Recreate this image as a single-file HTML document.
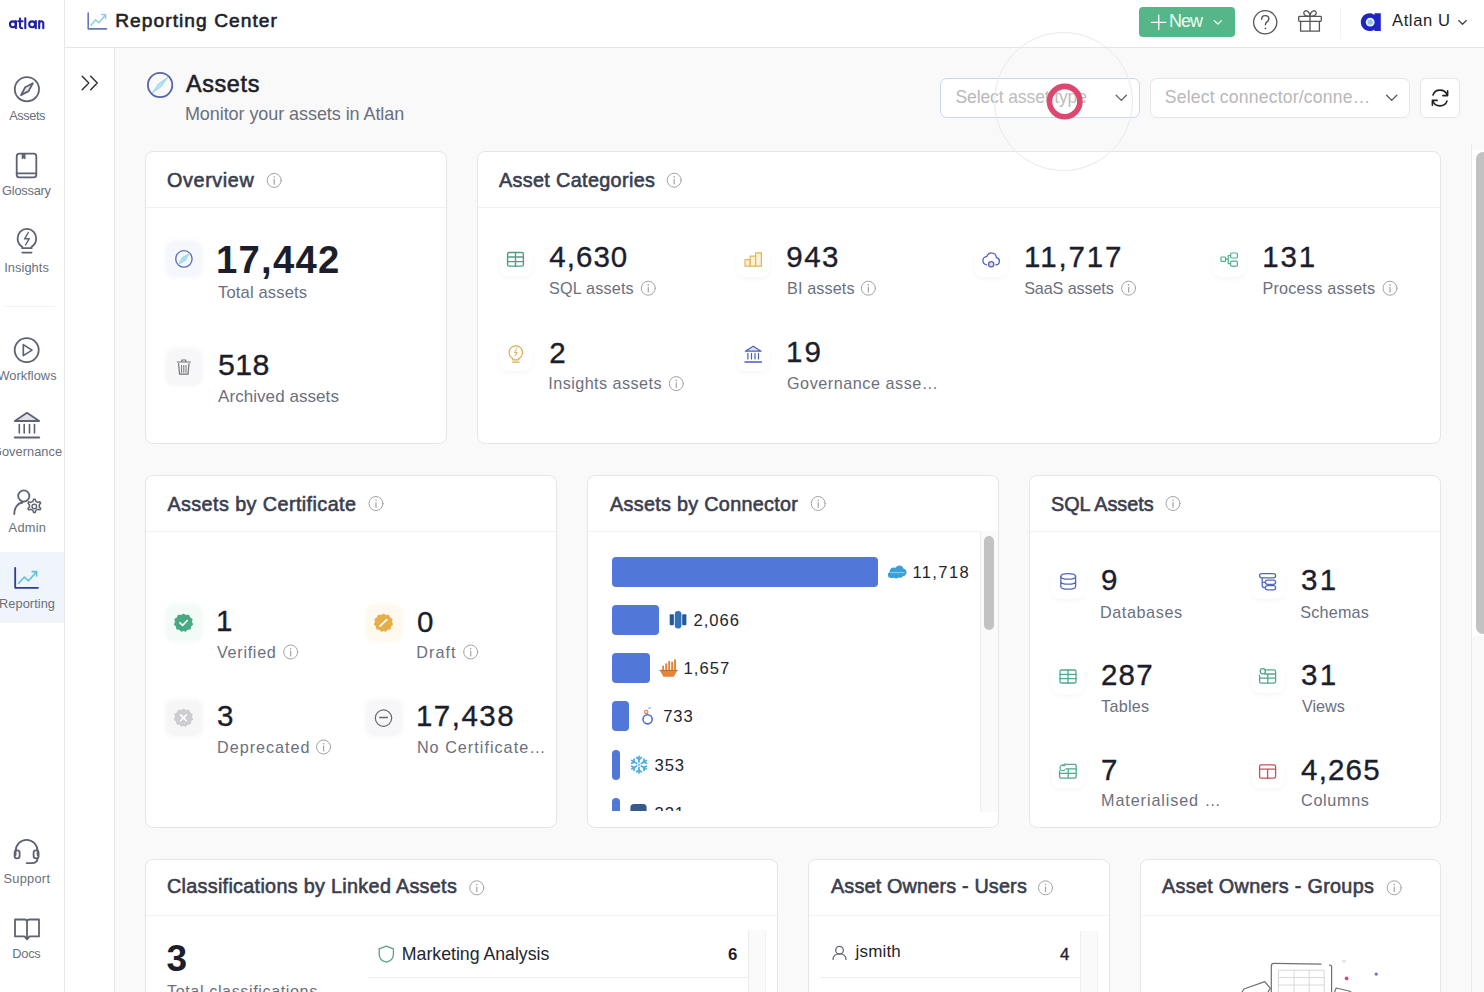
<!DOCTYPE html>
<html><head><meta charset="utf-8">
<style>
*{box-sizing:border-box}
html,body{margin:0;padding:0}
body{width:1484px;height:992px;overflow:hidden;position:relative;background:#f9f9f9;font-family:"Liberation Sans",sans-serif;color:#1f2130}
.a{position:absolute}
.t{position:absolute;white-space:nowrap;line-height:1}
svg{position:absolute;overflow:visible}
.textonly{background:#fff}
.textonly .t{color:#000 !important}
.textonly .a,.textonly svg,.textonly .card{display:none}
#side{left:0;top:0;width:65px;height:992px;background:#fff;border-right:1px solid #e8e8e8}
#hdr{left:65px;top:0;width:1419px;height:48px;background:#fff;border-bottom:1px solid #e4e4e4}
#col{left:65px;top:48px;width:50px;height:944px;background:#fff;border-right:1px solid #e6e6e6}
.card{position:absolute;background:#fff;border:1px solid #e6e6e6;border-radius:8px;overflow:hidden}
.ch{position:absolute;left:0;top:55px;right:0;height:1px;background:#f2f2f3}
.ib{position:absolute;width:34px;height:34px;border-radius:9px;background:#fff;box-shadow:0 3px 5px -1px rgba(40,50,90,0.045)}
.med{-webkit-text-stroke:0.35px currentColor}
.bar{position:absolute;left:612px;height:30px;background:#5177d9;border-radius:4px}
</style></head><body>

<!-- ===== sidebar ===== -->
<div id="side" class="a"></div>
<div class="a" style="left:5px;top:306px;width:50px;height:1px;background:#f1f1f1"></div>
<div class="a" style="left:0;top:552px;width:64px;height:71px;background:#f0f4fb"></div>

<!-- ===== header ===== -->
<div id="hdr" class="a"></div>
<div class="a" style="left:1340px;top:8px;width:1px;height:31px;background:#f3f3f3"></div>
<div class="a" style="left:1139px;top:7px;width:96px;height:30px;background:#55b689;border-radius:4px"></div>

<!-- ===== collapse column ===== -->
<div id="col" class="a"></div>

<!-- ===== page selects ===== -->
<div class="a" style="left:940px;top:78px;width:200px;height:40px;background:#fff;border:1px solid #c9d5f2;border-radius:7px"></div>
<div class="a" style="left:1150px;top:78px;width:260px;height:40px;background:#fff;border:1px solid #e6e6e6;border-radius:7px"></div>
<div class="a" style="left:1420px;top:78px;width:40px;height:40px;background:#fff;border:1px solid #e6e6e6;border-radius:6px"></div>

<!-- ===== cards ===== -->
<div class="card" style="left:145px;top:151px;width:302px;height:293px"><div class="ch"></div></div>
<div class="card" style="left:477px;top:151px;width:964px;height:293px"><div class="ch"></div></div>
<div class="card" style="left:145px;top:475px;width:412px;height:353px"><div class="ch"></div></div>
<div class="card" style="left:587px;top:475px;width:412px;height:353px"><div class="ch"></div></div>
<div class="card" style="left:1029px;top:475px;width:412px;height:353px"><div class="ch"></div></div>
<div class="card" style="left:145px;top:859px;width:633px;height:200px"><div class="ch"></div></div>
<div class="card" style="left:808px;top:859px;width:302px;height:200px"><div class="ch"></div></div>
<div class="card" style="left:1140px;top:859px;width:301px;height:200px"><div class="ch"></div></div>

<!-- main scrollbar -->
<div class="a" style="left:1471px;top:144px;width:13px;height:848px;background:#f9f9f9;border-left:1px solid #ebebeb"></div>
<div class="a" style="left:1472px;top:150px;width:12px;height:486px;background:#fff"></div>
<div class="a" style="left:1476px;top:152px;width:14px;height:482px;background:#c2c2c2;border-radius:7px"></div>

<!-- connector bars -->
<div class="bar" style="top:557px;width:266px"></div>
<div class="bar" style="top:605px;width:47px"></div>
<div class="bar" style="top:653px;width:38px"></div>
<div class="bar" style="top:701px;width:17px"></div>
<div class="bar" style="top:750px;width:8px"></div>
<div class="bar" style="top:798px;width:8px;height:13px;border-radius:4px 4px 0 0"></div>
<!-- connector scroll -->
<div class="a" style="left:980px;top:531px;width:18px;height:281px;background:#fafafa;border-left:1px solid #efefef"></div>
<div class="a" style="left:984px;top:536px;width:10px;height:94px;background:#c2c2c2;border-radius:5px"></div>

<!-- list scroll tracks -->
<div class="a" style="left:748px;top:930px;width:18px;height:62px;background:#fafafa;border-left:1px solid #ededed;border-right:1px solid #f1f1f1"></div>
<div class="a" style="left:368px;top:977px;width:380px;height:1px;background:#efefef"></div>
<div class="a" style="left:1080px;top:931px;width:18px;height:61px;background:#fafafa;border-left:1px solid #ededed;border-right:1px solid #f1f1f1"></div>
<div class="a" style="left:820px;top:977px;width:260px;height:1px;background:#efefef"></div>

<!-- icon boxes -->
<div class="a" style="left:167.3px;top:242.0px;width:34px;height:34px;border-radius:7px;background:#f6f7fc;box-shadow:0 0 5px 2px #f6f7fc"></div>
<div class="a" style="left:166.8px;top:350.0px;width:34px;height:34px;border-radius:7px;background:#f7f7f9;box-shadow:0 0 5px 2px #f7f7f9"></div>
<div class="ib" style="left:498.5px;top:242.3px"></div>
<div class="ib" style="left:736.2px;top:242.5px"></div>
<div class="ib" style="left:974.2px;top:243.0px"></div>
<div class="ib" style="left:1212.3px;top:242.5px"></div>
<div class="ib" style="left:498.8px;top:337.1px"></div>
<div class="ib" style="left:736.2px;top:337.1px"></div>
<div class="a" style="left:166.5px;top:605.9px;width:34px;height:34px;border-radius:7px;background:#f3fbf7;box-shadow:0 0 5px 2px #f3fbf7"></div>
<div class="a" style="left:366.5px;top:605.9px;width:34px;height:34px;border-radius:7px;background:#fdf9ee;box-shadow:0 0 5px 2px #fdf9ee"></div>
<div class="a" style="left:166.5px;top:700.8px;width:34px;height:34px;border-radius:7px;background:#f6f6f7;box-shadow:0 0 5px 2px #f6f6f7"></div>
<div class="a" style="left:366.5px;top:701.1px;width:34px;height:34px;border-radius:7px;background:#f7f7f9;box-shadow:0 0 5px 2px #f7f7f9"></div>
<div class="ib" style="left:1051.2px;top:564.5px"></div>
<div class="ib" style="left:1250.5px;top:564.6px"></div>
<div class="ib" style="left:1051.0px;top:659.5px"></div>
<div class="ib" style="left:1250.5px;top:659.0px"></div>
<div class="ib" style="left:1050.8px;top:754.0px"></div>
<div class="ib" style="left:1250.6px;top:754.4px"></div>

<div id="rc" class="t" style="left:115.20px;top:10.99px;font-size:19.19px;letter-spacing:1.044px;color:#1d1f2a;-webkit-text-stroke:0.6px currentColor">Reporting Center</div>
<div id="new" class="t" style="left:1169.10px;top:12.38px;font-size:18.02px;letter-spacing:-1.080px;color:#ecfff3">New</div>
<div id="user" class="t" style="left:1392.00px;top:13.12px;font-size:16.57px;letter-spacing:0.600px;color:#1d1f2a">Atlan U</div>
<div id="pt" class="t" style="left:185.90px;top:72.71px;font-size:23.40px;letter-spacing:0.648px;color:#1d1f2a;-webkit-text-stroke:0.6px currentColor">Assets</div>
<div id="ps" class="t" style="left:184.90px;top:105.08px;font-size:18.02px;letter-spacing:-0.073px;color:#6b6f7d">Monitor your assets in Atlan</div>
<div id="sel1" class="t" style="left:955.50px;top:88.75px;font-size:17.59px;letter-spacing:-0.146px;color:#b8b8b8">Select asset type</div>
<div id="sel2" class="t" style="left:1164.80px;top:88.75px;font-size:17.59px;letter-spacing:0.188px;color:#b8b8b8">Select connector/conne…</div>
<div id="t1" class="t" style="left:167.00px;top:170.67px;font-size:19.80px;letter-spacing:0.617px;color:#3a3e4e;-webkit-text-stroke:0.6px currentColor">Overview</div>
<div id="t2" class="t" style="left:498.90px;top:170.67px;font-size:19.80px;letter-spacing:0.360px;color:#3a3e4e;-webkit-text-stroke:0.6px currentColor">Asset Categories</div>
<div id="t3" class="t" style="left:167.40px;top:494.57px;font-size:19.80px;letter-spacing:0.414px;color:#3a3e4e;-webkit-text-stroke:0.6px currentColor">Assets by Certificate</div>
<div id="t4" class="t" style="left:610.00px;top:494.57px;font-size:19.80px;letter-spacing:0.300px;color:#3a3e4e;-webkit-text-stroke:0.6px currentColor">Assets by Connector</div>
<div id="t5" class="t" style="left:1051.00px;top:494.57px;font-size:19.80px;letter-spacing:-0.000px;color:#3a3e4e;-webkit-text-stroke:0.6px currentColor">SQL Assets</div>
<div id="t6" class="t" style="left:166.90px;top:877.47px;font-size:19.80px;letter-spacing:0.308px;color:#3a3e4e;-webkit-text-stroke:0.6px currentColor">Classifications by Linked Assets</div>
<div id="t7" class="t" style="left:831.00px;top:877.47px;font-size:19.80px;letter-spacing:0.180px;color:#3a3e4e;-webkit-text-stroke:0.6px currentColor">Asset Owners - Users</div>
<div id="t8" class="t" style="left:1162.00px;top:877.47px;font-size:19.80px;letter-spacing:0.315px;color:#3a3e4e;-webkit-text-stroke:0.6px currentColor">Asset Owners - Groups</div>
<div id="o1" class="t" style="left:216.10px;top:241.11px;font-size:38.23px;letter-spacing:1.260px;color:#1c1e2b;font-weight:bold">17,442</div>
<div id="o2" class="t" style="left:218.00px;top:284.92px;font-size:16.57px;letter-spacing:0.147px;color:#6c707e">Total assets</div>
<div id="o3" class="t med" style="left:218.10px;top:349.08px;font-size:30.38px;letter-spacing:0.270px;color:#1c1e2b">518</div>
<div id="o4" class="t" style="left:218.00px;top:387.75px;font-size:17.01px;letter-spacing:0.064px;color:#6c707e">Archived assets</div>
<div id="c1" class="t med" style="left:549.30px;top:242.42px;font-size:29.50px;letter-spacing:1.035px;color:#1c1e2b">4,630</div>
<div id="c1l" class="t" style="left:549.00px;top:279.83px;font-size:16.20px;letter-spacing:0.180px;color:#6c707e">SQL assets</div>
<div id="c2" class="t med" style="left:786.30px;top:242.42px;font-size:29.50px;letter-spacing:1.440px;color:#1c1e2b">943</div>
<div id="c2l" class="t" style="left:787.10px;top:279.83px;font-size:16.20px;letter-spacing:0.113px;color:#6c707e">BI assets</div>
<div id="c3" class="t med" style="left:1024.10px;top:242.42px;font-size:29.50px;letter-spacing:1.872px;color:#1c1e2b">11,717</div>
<div id="c3l" class="t" style="left:1024.20px;top:279.83px;font-size:16.20px;letter-spacing:-0.126px;color:#6c707e">SaaS assets</div>
<div id="c4" class="t med" style="left:1262.20px;top:242.42px;font-size:29.50px;letter-spacing:1.890px;color:#1c1e2b">131</div>
<div id="c4l" class="t" style="left:1262.40px;top:279.83px;font-size:16.20px;letter-spacing:0.235px;color:#6c707e">Process assets</div>
<div id="c5" class="t med" style="left:549.20px;top:338.32px;font-size:29.50px;letter-spacing:0.000px;color:#1c1e2b">2</div>
<div id="c5l" class="t" style="left:548.30px;top:375.03px;font-size:16.20px;letter-spacing:0.437px;color:#6c707e">Insights assets</div>
<div id="c6" class="t med" style="left:786.00px;top:337.32px;font-size:29.50px;letter-spacing:2.160px;color:#1c1e2b">19</div>
<div id="c6l" class="t" style="left:787.00px;top:375.03px;font-size:16.20px;letter-spacing:0.528px;color:#6c707e">Governance asse…</div>
<div id="v1" class="t med" style="left:216.10px;top:606.13px;font-size:29.50px;letter-spacing:0.000px;color:#1c1e2b">1</div>
<div id="v1l" class="t" style="left:217.00px;top:644.43px;font-size:16.20px;letter-spacing:0.694px;color:#6c707e">Verified</div>
<div id="v2" class="t med" style="left:417.10px;top:606.63px;font-size:29.50px;letter-spacing:0.000px;color:#1c1e2b">0</div>
<div id="v2l" class="t" style="left:416.30px;top:644.43px;font-size:16.20px;letter-spacing:1.035px;color:#6c707e">Draft</div>
<div id="v3" class="t med" style="left:216.90px;top:701.13px;font-size:29.50px;letter-spacing:0.000px;color:#1c1e2b">3</div>
<div id="v3l" class="t" style="left:217.10px;top:739.43px;font-size:16.20px;letter-spacing:0.960px;color:#6c707e">Deprecated</div>
<div id="v4" class="t med" style="left:415.90px;top:701.13px;font-size:29.50px;letter-spacing:1.512px;color:#1c1e2b">17,438</div>
<div id="v4l" class="t" style="left:416.90px;top:739.43px;font-size:16.20px;letter-spacing:1.016px;color:#6c707e">No Certificate…</div>
<div id="k1" class="t" style="left:912.40px;top:564.99px;font-size:16.60px;letter-spacing:1.368px;color:#23252e">11,718</div>
<div id="k2" class="t" style="left:693.50px;top:612.89px;font-size:16.60px;letter-spacing:0.990px;color:#23252e">2,066</div>
<div id="k3" class="t" style="left:683.40px;top:660.79px;font-size:16.60px;letter-spacing:1.080px;color:#23252e">1,657</div>
<div id="k4" class="t" style="left:663.20px;top:709.49px;font-size:16.60px;letter-spacing:0.900px;color:#23252e">733</div>
<div id="k5" class="t" style="left:654.60px;top:757.99px;font-size:16.60px;letter-spacing:0.810px;color:#23252e">353</div>
<div id="k6" class="t" style="left:654.60px;top:806.19px;font-size:16.60px;letter-spacing:0.810px;color:#23252e">321</div>
<div id="s1" class="t med" style="left:1101.10px;top:564.72px;font-size:29.50px;letter-spacing:0.000px;color:#1c1e2b">9</div>
<div id="s1l" class="t" style="left:1100.00px;top:603.73px;font-size:16.20px;letter-spacing:0.585px;color:#6c707e">Databases</div>
<div id="s2" class="t med" style="left:1301.10px;top:564.72px;font-size:29.50px;letter-spacing:2.340px;color:#1c1e2b">31</div>
<div id="s2l" class="t" style="left:1300.30px;top:603.73px;font-size:16.20px;letter-spacing:0.180px;color:#6c707e">Schemas</div>
<div id="s3" class="t med" style="left:1100.90px;top:660.13px;font-size:29.50px;letter-spacing:1.260px;color:#1c1e2b">287</div>
<div id="s3l" class="t" style="left:1101.10px;top:697.93px;font-size:16.20px;letter-spacing:0.252px;color:#6c707e">Tables</div>
<div id="s4" class="t med" style="left:1301.10px;top:660.13px;font-size:29.50px;letter-spacing:2.340px;color:#1c1e2b">31</div>
<div id="s4l" class="t" style="left:1302.10px;top:697.93px;font-size:16.20px;letter-spacing:-0.045px;color:#6c707e">Views</div>
<div id="s5" class="t med" style="left:1100.90px;top:755.13px;font-size:29.50px;letter-spacing:0.000px;color:#1c1e2b">7</div>
<div id="s5l" class="t" style="left:1101.10px;top:792.43px;font-size:16.20px;letter-spacing:0.886px;color:#6c707e">Materialised …</div>
<div id="s6" class="t med" style="left:1301.10px;top:755.13px;font-size:29.50px;letter-spacing:1.170px;color:#1c1e2b">4,265</div>
<div id="s6l" class="t" style="left:1301.10px;top:792.43px;font-size:16.20px;letter-spacing:0.660px;color:#6c707e">Columns</div>
<div id="b1" class="t" style="left:166.40px;top:940.30px;font-size:37.06px;letter-spacing:0.000px;color:#1c1e2b;font-weight:bold">3</div>
<div id="b1l" class="t" style="left:167.00px;top:983.03px;font-size:16.20px;letter-spacing:0.585px;color:#6c707e">Total classifications</div>
<div id="b2" class="t" style="left:401.80px;top:945.73px;font-size:17.73px;letter-spacing:-0.011px;color:#23252e">Marketing Analysis</div>
<div id="b3" class="t" style="left:728.00px;top:947.42px;font-size:16.80px;letter-spacing:0.000px;color:#1c1e2b;font-weight:bold">6</div>
<div id="b4" class="t" style="left:855.50px;top:943.35px;font-size:17.00px;letter-spacing:0.180px;color:#23252e">jsmith</div>
<div id="b5" class="t med" style="left:1059.90px;top:947.22px;font-size:16.80px;letter-spacing:0.000px;color:#1c1e2b">4</div>
<div id="n1" class="t" style="left:9.20px;top:109.92px;font-size:12.80px;letter-spacing:-0.432px;color:#6b6f7b">Assets</div>
<div id="n2" class="t" style="left:2.10px;top:185.32px;font-size:12.80px;letter-spacing:-0.231px;color:#6b6f7b">Glossary</div>
<div id="n3" class="t" style="left:4.20px;top:262.12px;font-size:12.80px;letter-spacing:0.077px;color:#6b6f7b">Insights</div>
<div id="n4" class="t" style="left:-73.00px;width:200px;text-align:center;top:370.12px;font-size:12.80px;letter-spacing:0.05px;color:#6b6f7b">Workflows</div>
<div id="n5" class="t" style="left:-73.00px;width:200px;text-align:center;top:446.12px;font-size:12.80px;letter-spacing:0.05px;color:#6b6f7b">Governance</div>
<div id="n6" class="t" style="left:8.60px;top:522.12px;font-size:12.80px;letter-spacing:0.270px;color:#6b6f7b">Admin</div>
<div id="n7" class="t" style="left:-73.00px;width:200px;text-align:center;top:598.12px;font-size:12.80px;letter-spacing:0.05px;color:#6b6f7b">Reporting</div>
<div id="n8" class="t" style="left:3.50px;top:872.72px;font-size:12.80px;letter-spacing:0.270px;color:#6b6f7b">Support</div>
<div id="n9" class="t" style="left:12.30px;top:948.32px;font-size:12.80px;letter-spacing:-0.240px;color:#6b6f7b">Docs</div>

<svg style="left:0;top:0" width="1484" height="992" viewBox="0 0 1484 992" fill="none" stroke-linecap="round" stroke-linejoin="round">
<!-- logo -->
<g stroke="#1f21a6" stroke-width="2.1" fill="none">
 <circle cx="12.9" cy="24.3" r="2.95"/><path d="M15.9 21.1 V28.2"/>
 <path d="M20 18.6 V26.3 C20 27.6 20.7 28.2 22.2 28.2 M18.3 21.3 H22.6"/>
 <path d="M25.3 18.4 V28.2"/>
 <circle cx="32.1" cy="24.3" r="2.95"/><path d="M35.8 21.1 V28.2"/>
 <path d="M39.2 21.1 V28.2 M39.2 24 C39.2 22.2 40.1 21.3 41.3 21.3 C42.5 21.3 43.3 22.2 43.3 23.8 V28.2"/>
</g>
<!-- sidebar icons -->
<g stroke="#5f6270" stroke-width="1.8">
 <circle cx="26.9" cy="89.2" r="12.1"/>
 <path d="M21 95.1 L25.2 87.3 L32.8 83.3 L28.6 91.1 Z" fill="#e9eaee"/>
 <rect x="16.7" y="153.7" width="19.6" height="23.7" rx="2.6"/>
 <path d="M16.7 173.3 H36.3"/>
 <path d="M22.3 154 V158.6 L23.6 157.3 L24.9 158.6 V154" fill="#5f6270" stroke-width="1.2"/>
 <path d="M22.2 246.8 C19.6 245.2 17.6 242.1 17.6 238.3 C17.6 233 21.8 228.9 26.9 228.9 C32 228.9 36.2 233 36.2 238.3 C36.2 242.1 34.2 245.2 31.6 246.8 V248.2 H22.2 Z"/>
 <path d="M22.3 252.6 H31.5"/>
 <path d="M28.3 232.5 L24.6 238.8 H29.2 L25.5 245" stroke-width="1.4"/>
 <circle cx="26.7" cy="350.1" r="12"/>
 <path d="M23.3 344.6 V355.6 L32 350.1 Z" stroke-width="1.7"/>
 <path d="M14.8 421 L27 412.8 L39.2 421 Z" fill="#dfe2ec"/>
 <path d="M19.3 424.5 V433 M24.2 424.5 V433 M29.5 424.5 V433 M34.5 424.5 V433" stroke-width="1.6"/>
 <path d="M14.8 437.6 H39.2" stroke-width="2"/>
 <circle cx="23.8" cy="496" r="5.6"/>
 <path d="M14.3 514 C14.3 508 17.5 503.2 22.6 502.5"/>
 <path d="M33.6 499.2 l1.5 0 l0.7 2.1 l2 1.1 l2.1 -0.6 l0.8 1.3 l-1.4 1.7 v2.1 l1.4 1.7 l-0.8 1.3 l-2.1 -0.6 l-2 1.1 l-0.7 2.1 h-1.5 l-0.7 -2.1 l-2 -1.1 l-2.1 0.6 l-0.8 -1.3 l1.4 -1.7 v-2.1 l-1.4 -1.7 l0.8 -1.3 l2.1 0.6 l2 -1.1 Z" stroke-width="1.5"/>
 <circle cx="34.3" cy="506.4" r="2.3" stroke-width="1.4"/>
 <path d="M15.6 855 V851.5 C15.6 844.8 20.5 839.9 26.6 839.9 C32.7 839.9 37.6 844.8 37.6 851.5 V855"/>
 <rect x="14.6" y="850.3" width="5" height="8" rx="2.3"/>
 <rect x="33.6" y="850.3" width="5" height="8" rx="2.3"/>
 <path d="M37.6 858 C37.6 861.5 35 863.1 31.5 863.1 H26.6"/>
 <path d="M15 919.5 H24.5 C26 919.5 27 920.4 27 921.8 V938 M39 919.5 H29.5 C28 919.5 27 920.4 27 921.8 M15 919.5 V936.4 H24.5 L27 939.3 L29.5 936.4 H39 V919.5"/>
</g>
<g stroke-width="1.8">
 <path d="M15.2 567.8 V587.8 H38" stroke="#2d3f8e"/>
 <path d="M18.6 583.2 L24.4 577 L28.5 580.8 L36.4 572" stroke="#5ec1dc" stroke-width="1.6"/>
 <path d="M32.2 571.6 H36.6 V576" stroke="#5ec1dc" stroke-width="1.6"/>
</g>
<!-- header icons -->
<g stroke-width="1.6">
 <path d="M88.2 13 V28.9 H106.5" stroke="#6877b8"/>
 <path d="M91 25.3 L95.6 19.8 L98.8 22.8 L105.2 15.2" stroke="#8ccdea" stroke-width="1.5"/>
 <path d="M101.6 14.6 H105.6 V18.6" stroke="#8ccdea" stroke-width="1.5"/>
</g>
<path d="M82.2 76.3 L88.8 83 L82.2 89.7 M90.7 76.3 L97.3 83 L90.7 89.7" stroke="#2b2d35" stroke-width="1.4"/>
<g stroke="#fff" stroke-width="1.4"><path d="M1158.7 15.3 V29.6 M1151.6 22.4 H1165.8"/><path d="M1214.2 20.6 L1217.9 24 L1221.5 20.6" stroke-width="1.2"/></g>
<circle cx="1265.2" cy="22.3" r="11.6" stroke="#555" stroke-width="1.3"/>
<path d="M1261.6 19.2 C1261.6 16.8 1263.2 15.6 1265.2 15.6 C1267.3 15.6 1268.9 16.9 1268.9 18.9 C1268.9 21.6 1265.4 21.7 1265.4 24.8" stroke="#555" stroke-width="1.4"/>
<circle cx="1265.4" cy="28.3" r="0.9" fill="#555"/>
<g stroke="#555" stroke-width="1.3">
 <rect x="1298.7" y="16.3" width="22.6" height="5" rx="0.8"/>
 <path d="M1300.6 21.3 V31.2 H1319.4 V21.3 M1310 16.3 V31.2"/>
 <path d="M1310 16.3 C1306.5 16.3 1303.8 15.2 1303.8 12.9 C1303.8 11.4 1305.2 10.5 1306.5 10.8 C1308.5 11.3 1310 14.2 1310 16.3 C1310 14.2 1311.5 11.3 1313.5 10.8 C1314.8 10.5 1316.2 11.4 1316.2 12.9 C1316.2 15.2 1313.5 16.3 1310 16.3"/>
</g>
<path d="M1380.8 13.3 V31 H1374.5 V29.4 C1373.1 30.5 1371.4 31.1 1369.6 31.1 C1364.6 31.1 1360.8 27 1360.8 22.1 C1360.8 17.2 1364.6 13.2 1369.6 13.2 C1371.4 13.2 1373.1 13.8 1374.5 14.9 V13.3 Z" fill="#1f25c4"/>
<circle cx="1370.2" cy="22.2" r="4.4" fill="#e9f3fb"/><circle cx="1370.2" cy="22.2" r="2.6" fill="#8fc7ea"/>
<path d="M1458.6 20.6 L1462.5 24.2 L1466.4 20.6" stroke="#444" stroke-width="1.3"/>
<!-- page title compass -->
<circle cx="160.1" cy="85" r="12.2" stroke="#5565a8" stroke-width="1.8"/>
<path d="M152.4 92.7 L158.9 83.6 L167.8 77.3 L161.3 86.4 Z" fill="#b3e2f2" stroke="#86cfe6" stroke-width="0.8"/>
<!-- dropdown chevrons + refresh -->
<path d="M1116.2 95.2 L1121.3 100.4 L1126.4 95.2 M1386.6 95.2 L1391.7 100.4 L1396.8 95.2" stroke="#555" stroke-width="1.3"/>
<g stroke="#222" stroke-width="1.6">
 <path d="M1447.2 95.2 C1446.2 92 1443.4 90.1 1440 90.1 C1436.7 90.1 1434 92.1 1433 95"/>
 <path d="M1432.8 100.8 C1433.8 104 1436.6 105.9 1440 105.9 C1443.3 105.9 1446 103.9 1447 101"/>
 <path d="M1447.6 90.8 V95.6 H1442.9 M1432.4 105.2 V100.4 H1437.1"/>
</g>
<!-- click indicator -->
<circle cx="1063.5" cy="101.5" r="69" stroke="#e9e9e9" stroke-width="1" fill="rgba(255,255,255,0.08)"/>
<circle cx="1064.7" cy="101.6" r="15.2" stroke="#dc4870" stroke-width="5.6"/>
</svg>
<svg style="left:0;top:0" width="1484" height="992" fill="none" stroke-linecap="round" stroke-linejoin="round">
<circle cx="274.2" cy="180.4" r="7" stroke="#a3a3a8" stroke-width="1"/><path d="M274.2 179.6 V184.2" stroke="#a3a3a8" stroke-width="1.2"/><circle cx="274.2" cy="177.1" r="0.8" fill="#a3a3a8"/>
<circle cx="674.2" cy="180.2" r="7" stroke="#a3a3a8" stroke-width="1"/><path d="M674.2 179.4 V184.0" stroke="#a3a3a8" stroke-width="1.2"/><circle cx="674.2" cy="176.9" r="0.8" fill="#a3a3a8"/>
<circle cx="376" cy="503.5" r="7" stroke="#a3a3a8" stroke-width="1"/><path d="M376 502.7 V507.3" stroke="#a3a3a8" stroke-width="1.2"/><circle cx="376" cy="500.2" r="0.8" fill="#a3a3a8"/>
<circle cx="818.2" cy="503.5" r="7" stroke="#a3a3a8" stroke-width="1"/><path d="M818.2 502.7 V507.3" stroke="#a3a3a8" stroke-width="1.2"/><circle cx="818.2" cy="500.2" r="0.8" fill="#a3a3a8"/>
<circle cx="1173" cy="503.5" r="7" stroke="#a3a3a8" stroke-width="1"/><path d="M1173 502.7 V507.3" stroke="#a3a3a8" stroke-width="1.2"/><circle cx="1173" cy="500.2" r="0.8" fill="#a3a3a8"/>
<circle cx="476.8" cy="887.8" r="7" stroke="#a3a3a8" stroke-width="1"/><path d="M476.8 887.0 V891.6" stroke="#a3a3a8" stroke-width="1.2"/><circle cx="476.8" cy="884.5" r="0.8" fill="#a3a3a8"/>
<circle cx="1045.5" cy="887.8" r="7" stroke="#a3a3a8" stroke-width="1"/><path d="M1045.5 887.0 V891.6" stroke="#a3a3a8" stroke-width="1.2"/><circle cx="1045.5" cy="884.5" r="0.8" fill="#a3a3a8"/>
<circle cx="1394.2" cy="887.8" r="7" stroke="#a3a3a8" stroke-width="1"/><path d="M1394.2 887.0 V891.6" stroke="#a3a3a8" stroke-width="1.2"/><circle cx="1394.2" cy="884.5" r="0.8" fill="#a3a3a8"/>
<circle cx="648.3" cy="288.2" r="7" stroke="#a3a3a8" stroke-width="1"/><path d="M648.3 287.4 V292.0" stroke="#a3a3a8" stroke-width="1.2"/><circle cx="648.3" cy="284.9" r="0.8" fill="#a3a3a8"/>
<circle cx="868.4" cy="288.2" r="7" stroke="#a3a3a8" stroke-width="1"/><path d="M868.4 287.4 V292.0" stroke="#a3a3a8" stroke-width="1.2"/><circle cx="868.4" cy="284.9" r="0.8" fill="#a3a3a8"/>
<circle cx="1128.6" cy="288.2" r="7" stroke="#a3a3a8" stroke-width="1"/><path d="M1128.6 287.4 V292.0" stroke="#a3a3a8" stroke-width="1.2"/><circle cx="1128.6" cy="284.9" r="0.8" fill="#a3a3a8"/>
<circle cx="1390" cy="288.2" r="7" stroke="#a3a3a8" stroke-width="1"/><path d="M1390 287.4 V292.0" stroke="#a3a3a8" stroke-width="1.2"/><circle cx="1390" cy="284.9" r="0.8" fill="#a3a3a8"/>
<circle cx="676.3" cy="383.6" r="7" stroke="#a3a3a8" stroke-width="1"/><path d="M676.3 382.8 V387.4" stroke="#a3a3a8" stroke-width="1.2"/><circle cx="676.3" cy="380.3" r="0.8" fill="#a3a3a8"/>
<circle cx="290.7" cy="652" r="7" stroke="#a3a3a8" stroke-width="1"/><path d="M290.7 651.2 V655.8" stroke="#a3a3a8" stroke-width="1.2"/><circle cx="290.7" cy="648.7" r="0.8" fill="#a3a3a8"/>
<circle cx="470.7" cy="652" r="7" stroke="#a3a3a8" stroke-width="1"/><path d="M470.7 651.2 V655.8" stroke="#a3a3a8" stroke-width="1.2"/><circle cx="470.7" cy="648.7" r="0.8" fill="#a3a3a8"/>
<circle cx="323.6" cy="747" r="7" stroke="#a3a3a8" stroke-width="1"/><path d="M323.6 746.2 V750.8" stroke="#a3a3a8" stroke-width="1.2"/><circle cx="323.6" cy="743.7" r="0.8" fill="#a3a3a8"/>
</svg>
<svg style="left:0;top:0" width="1484" height="992" viewBox="0 0 1484 992" fill="none" stroke-linecap="round" stroke-linejoin="round">
<!-- overview -->
<circle cx="183.9" cy="258.9" r="8.2" stroke="#5c6ab0" stroke-width="1.3"/>
<path d="M178.6 264.2 L182.3 257.6 L189.2 253.6 L185.5 260.2 Z" fill="#a9def0" stroke="#86cde6" stroke-width="0.6"/>
<g stroke="#737478" stroke-width="1.2">
 <path d="M177.2 362 H190.4 M181.8 361.8 V360 H185.8 V361.8"/>
 <path d="M178.6 363.6 L179.6 374.2 H188 L189 363.6"/>
 <path d="M181.6 365.4 V372.4 M183.8 365.4 V372.4 M186 365.4 V372.4" stroke-width="1"/>
</g>
<!-- categories -->
<g stroke="#4f9f84" stroke-width="1.4">
 <rect x="507.6" y="252.5" width="15.8" height="13.6" rx="1.6"/>
 <path d="M507.6 257 H523.4 M507.6 261.6 H523.4 M515.5 252.5 V266.1"/>
</g>
<g stroke="#dfb75a" stroke-width="1.2" fill="#fcf1d4">
 <rect x="745" y="259.6" width="5.2" height="6.6"/>
 <rect x="750.2" y="256.2" width="5.4" height="10"/>
 <rect x="755.6" y="252.9" width="5.8" height="13.3"/>
</g>
<g stroke="#4d61c0" stroke-width="1.3">
 <path d="M986.6 264.8 C984.4 264.5 982.9 262.8 982.9 260.6 C982.9 258.4 984.6 256.6 986.8 256.6 C987.6 254.2 989.3 252.8 991.3 252.8 C994.3 252.8 996.3 255 996.3 257.6 C998.1 257.8 999.4 259.3 999.4 261.2 C999.4 263.2 997.9 264.7 995.8 264.8"/>
 <circle cx="991.2" cy="264.2" r="2.6" fill="#dfe4f7"/>
</g>
<g stroke="#4fae8a" stroke-width="1.2">
 <rect x="1221" y="257" width="4.6" height="4.4" rx="0.6"/>
 <rect x="1230.6" y="253" width="6.8" height="5" rx="1.2"/>
 <rect x="1230.6" y="261.2" width="6.8" height="5" rx="1.2"/>
 <path d="M1225.6 259.2 H1228.2 M1228.2 255.5 V263.7 M1228.2 255.5 H1230.6 M1228.2 263.7 H1230.6"/>
</g>
<g stroke="#e0ad4c" stroke-width="1.2">
 <path d="M512.8 358.6 C510.6 357.4 509.1 355 509.1 352.3 C509.1 348.5 512.1 345.8 515.8 345.8 C519.5 345.8 522.5 348.5 522.5 352.3 C522.5 355 521 357.4 518.8 358.6 V359.8 H512.8 Z"/>
 <path d="M512.6 362.2 H519"/>
 <path d="M516.8 348.6 L514.5 352.5 H517.2 L514.9 356" stroke-width="1"/>
</g>
<g stroke="#4b5db8" stroke-width="1.2">
 <path d="M745.3 351.2 L753.2 346.2 L761.1 351.2 Z" fill="#dde3f6"/>
 <path d="M747.9 353.4 V359 M751.5 353.4 V359 M755 353.4 V359 M758.5 353.4 V359"/>
 <path d="M745 362 H761.4" stroke-width="1.5"/>
</g>
<!-- certificates -->
<path d="M183.5 614.3 L185.9 615.7 L188.6 615.3 L189.6 617.9 L192 619.2 L191.4 621.9 L192.5 624.4 L190.5 626.2 L190.1 628.9 L187.4 629.2 L185.5 631.2 L183.5 630.2 L181.5 631.2 L179.6 629.2 L176.9 628.9 L176.5 626.2 L174.5 624.4 L175.6 621.9 L175 619.2 L177.4 617.9 L178.4 615.3 L181.1 615.7 Z" fill="#4aa985" stroke="#4aa985" stroke-width="1.2"/>
<path d="M180 622.9 L182.6 625.4 L187.2 620.6" stroke="#fff" stroke-width="1.6"/>
<path d="M383.5 614.3 L385.9 615.7 L388.6 615.3 L389.6 617.9 L392 619.2 L391.4 621.9 L392.5 624.4 L390.5 626.2 L390.1 628.9 L387.4 629.2 L385.5 631.2 L383.5 630.2 L381.5 631.2 L379.6 629.2 L376.9 628.9 L376.5 626.2 L374.5 624.4 L375.6 621.9 L375 619.2 L377.4 617.9 L378.4 615.3 L381.1 615.7 Z" fill="#e7ae48" stroke="#e7ae48" stroke-width="1.2"/>
<path d="M380 626.2 L386.8 619.6" stroke="#fff" stroke-width="1.7"/>
<path d="M183.5 709.3 L185.9 710.7 L188.6 710.3 L189.6 712.9 L192 714.2 L191.4 716.9 L192.5 719.4 L190.5 721.2 L190.1 723.9 L187.4 724.2 L185.5 726.2 L183.5 725.2 L181.5 726.2 L179.6 724.2 L176.9 723.9 L176.5 721.2 L174.5 719.4 L175.6 716.9 L175 714.2 L177.4 712.9 L178.4 710.3 L181.1 710.7 Z" fill="#cdcdcf" stroke="#cdcdcf" stroke-width="1.2"/>
<path d="M180.6 714.9 L186.4 720.7 M186.4 714.9 L180.6 720.7" stroke="#fff" stroke-width="1.6"/>
<circle cx="383.5" cy="718.1" r="8.2" stroke="#68696f" stroke-width="1.2"/>
<path d="M379.7 717.4 H387.3" stroke="#68696f" stroke-width="1.5"/>
<!-- connector logos -->
<path d="M891.2 578 C889 578 887.9 576.6 887.9 574.9 C887.9 573.5 888.7 572.4 889.8 572 C889.6 570.9 889.9 569.6 890.9 568.6 C892.1 567.4 894 567.2 895.4 568 C896.2 566.3 898.1 565.2 900 565.5 C901.8 565.8 903 567 903.4 568.6 C905.1 568.8 906.6 570.3 906.6 572.2 C906.6 574.5 904.9 576.2 902.8 576.2 C901.9 577.6 900.3 578.2 898.8 577.6 C897.6 578.6 895.4 578.7 894 577.8 C893.2 578 892.2 578 891.2 578 Z" fill="#3b9fd9"/>
<path d="M890.8 572.6 H904.2" stroke="#a9dcf5" stroke-width="0.8"/>
<rect x="674.8" y="611" width="6.6" height="17.4" rx="3.2" fill="#2f71ba"/>
<rect x="669.7" y="614.2" width="4.2" height="11" rx="1" fill="#24599a"/>
<rect x="682.2" y="614.2" width="4.2" height="11" rx="1" fill="#24599a"/>
<g fill="#e58636">
 <rect x="662.2" y="665.6" width="1.8" height="5"/><rect x="665.2" y="663.4" width="1.9" height="7.2"/><rect x="668.2" y="661" width="1.9" height="9.6"/><rect x="671.2" y="661.8" width="1.9" height="8.8"/><rect x="674.1" y="659.4" width="1.9" height="11.2"/>
 <path d="M659.8 670.2 H677.4 L673.8 676.8 H663.4 Z"/>
</g>
<path d="M659.8 670.4 H677.4" stroke="#b65a1d" stroke-width="0.8"/>
<circle cx="647.6" cy="719.3" r="4.6" stroke="#4e6fd1" stroke-width="1.6"/>
<circle cx="646.2" cy="711.9" r="1.7" stroke="#e8704b" stroke-width="1.1"/>
<path d="M648.8 708.4 L650.6 707.8" stroke="#7d9fdc" stroke-width="1.1"/>
<g stroke="#52ade0" stroke-width="1.7">
 <path d="M639.00 762.10 L639.00 756.30 M641.40 757.50 L639.00 759.50 L636.60 757.50 M636.75 763.40 L631.73 760.50 M633.96 759.02 L634.50 762.10 L631.56 763.18 M636.75 766.00 L631.73 768.90 M631.56 766.22 L634.50 767.30 L633.96 770.38 M639.00 767.30 L639.00 773.10 M636.60 771.90 L639.00 769.90 L641.40 771.90 M641.25 766.00 L646.27 768.90 M644.04 770.38 L643.50 767.30 L646.44 766.22 M641.25 763.40 L646.27 760.50 M646.44 763.18 L643.50 762.10 L644.04 759.02"/>
 <circle cx="639" cy="764.7" r="1" fill="#52ade0" stroke="none"/>
</g>
<rect x="630.4" y="804" width="16.2" height="12" rx="3.5" fill="#37598c"/>
<!-- sql icons -->
<g stroke="#5567bc" stroke-width="1.3">
 <ellipse cx="1068.2" cy="576.4" rx="7.4" ry="2.8"/>
 <path d="M1060.8 576.4 V586.4 C1060.8 588 1064.1 589.2 1068.2 589.2 C1072.3 589.2 1075.6 588 1075.6 586.4 V576.4 M1060.8 581.4 C1060.8 583 1064.1 584.2 1068.2 584.2 C1072.3 584.2 1075.6 583 1075.6 581.4"/>
 <rect x="1259.6" y="573.6" width="16" height="4.2" rx="2.1"/>
 <rect x="1265.4" y="580.2" width="10.2" height="4.2" rx="2.1"/>
 <rect x="1265.4" y="585.6" width="10.2" height="4.2" rx="2.1"/>
 <path d="M1262.2 577.8 V585.4 C1262.2 586.8 1263 587.7 1265.4 587.7 M1262.2 582.3 H1265.4"/>
</g>
<g stroke="#52a88a" stroke-width="1.3">
 <rect x="1060" y="670" width="16" height="13" rx="1.6"/>
 <path d="M1060 674.4 H1076 M1060 678.7 H1076 M1068 670 V683"/>
 <path d="M1264.6 669.8 H1274 C1275 669.8 1275.6 670.4 1275.6 671.4 V681.6 C1275.6 682.6 1275 683.2 1274 683.2 H1261.2 C1260.2 683.2 1259.6 682.6 1259.6 681.6 V675.2 M1259.6 678.2 H1275.6 M1264.6 674 H1275.6 M1267.8 674 V683.2"/>
 <circle cx="1262.8" cy="671.2" r="2.6"/>
 <path d="M1265.2 764.6 H1074.6" stroke="none"/>
 <path d="M1065.6 764.4 H1074.6 C1075.6 764.4 1076.2 765 1076.2 766 V776.6 C1076.2 777.6 1075.6 778.2 1074.6 778.2 H1061.2 C1060.2 778.2 1059.6 777.6 1059.6 776.6 V771 M1059.6 773.4 H1076.2 M1066 768.8 H1076.2 M1068.2 768.8 V778.2"/>
 <path d="M1064.6 769.8 C1063.8 770.8 1061.6 770.9 1060.6 769.8 C1059.6 768.7 1059.8 766.6 1061 765.6 C1062 764.8 1063.6 764.8 1064.6 765.6 M1064.8 763.8 V765.8 H1062.8" stroke-width="1.1"/>
</g>
<g stroke="#c8505c" stroke-width="1.3">
 <rect x="1259.6" y="764.8" width="16" height="13.4" rx="1.6"/>
 <path d="M1259.6 769.2 H1275.6 M1267.6 769.2 V778.2"/>
</g>
<!-- bottom -->
<path d="M386.3 946.2 L393.4 948.8 V954.4 C393.4 958 390.6 960.9 386.3 962.2 C382 960.9 379.2 958 379.2 954.4 V948.8 Z" stroke="#5b9e89" stroke-width="1.3"/>
<g stroke="#656870" stroke-width="1.3">
 <circle cx="839.5" cy="950.2" r="3.8"/>
 <path d="M833 959.4 C833 955.9 835.9 953.9 839.5 953.9 C843.1 953.9 846 955.9 846 959.4"/>
</g>
<!-- groups illustration -->
<g stroke="#6f6f74" stroke-width="1.2" fill="#fff">
 <path d="M1242 992 L1244 989 L1264.8 981.6 L1270.4 988.4 L1268 992"/>
 <path d="M1334.6 992 L1336.2 988 L1349 991 L1351 992"/>
 <path d="M1271.3 992 V966 C1271.3 964.2 1272.2 963.4 1274 963.4 L1321 964.2"/>
 <path d="M1329.6 965.2 C1330.8 965.2 1331.6 966 1331.6 967.2 V992"/>
</g>
<g stroke="#d8d8dc" stroke-width="1">
 <rect x="1278.8" y="970.2" width="45.4" height="24"/>
 <path d="M1278.8 977.6 H1324.2 M1278.8 985 H1324.2 M1294 970.2 V992 M1309.2 970.2 V992"/>
</g>
<circle cx="1346.6" cy="978.4" r="1.9" fill="#d44a70"/>
<circle cx="1376.2" cy="974.1" r="1.7" fill="#6b74d2"/>
<path d="M1342.6 960.6 l1.4 1.4 l1.4 -1.4" stroke="#e0e0e4" stroke-width="1.6"/>
</svg>

<div class="a" style="left:600px;top:811px;width:379px;height:15px;background:#fff;z-index:5"></div>


</body></html>
